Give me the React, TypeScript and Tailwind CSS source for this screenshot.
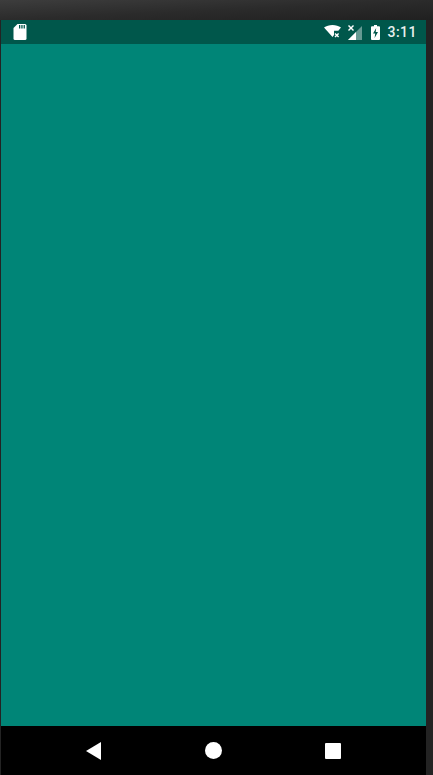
export default function App() {
    return (
        <div className="h-[775px] w-[433px] overflow-hidden bg-[#232323] flex flex-col">
            {/* emulator frame top edge */}
            <div className="h-5 bg-gradient-to-br from-[#3d3d3d] via-[#2b2b2b] to-[#202020]" />
            <div className="flex-1 flex flex-col ml-px mr-[7px]">
                {/* status bar */}
                <div className="h-6 bg-[#00574b] flex items-center justify-between pl-3 pr-[9px] text-white">
                    <svg width="14" height="16" viewBox="0 0 14 16" fill="#fff">
                        <path d="M4.5 0H12a1.5 1.5 0 0 1 1.5 1.5v13A1.5 1.5 0 0 1 12 16H2a1.5 1.5 0 0 1-1.5-1.5V4z" />
                        <path d="M6 1h1.3v3.5H6zM8.3 1h1.3v3.5H8.3zM10.6 1h1.3v3.5h-1.3z" fill="#00574b" />
                    </svg>
                    <div className="flex items-center">
                        <svg width="18" height="14" viewBox="0 0 18 14" fill="#fff">
                            <path d="M0 2.6C2.4.9 5.2 0 8.5 0s6.1.9 8.5 2.6l-2.7 3.1H10v4.4l-1.5 1.9z" />
                            <path d="M11.5 8l1.3 1.3L14.1 8l1 1-1.3 1.3 1.3 1.3-1 1-1.3-1.3-1.3 1.3-1-1 1.3-1.3L10.5 9z" />
                        </svg>
                        <svg className="ml-[6px]" width="14" height="15" viewBox="0 0 14 15" fill="#fff">
                            <path d="M14 1v14H0z" fillOpacity="0.4" />
                            <path d="M8 7v8H0z" />
                            <path d="M1 0l2 2 2-2 1 1-2 2 2 2-1 1-2-2-2 2-1-1 2-2-2-2z" />
                        </svg>
                        <svg className="ml-[9px]" width="9" height="15" viewBox="0 0 9 15" fill="#fff">
                            <path d="M3 0h3v1.2h2a1 1 0 0 1 1 1V14a1 1 0 0 1-1 1H1a1 1 0 0 1-1-1V2.2a1 1 0 0 1 1-1h2z" />
                            <path d="M5.2 3L2 8.6h2.2L3.6 13 7 7H4.7z" fill="#00574b" />
                        </svg>
                        <span className="ml-[7px] text-[14px] leading-none font-medium tracking-[0.5px] text-[#e8f0ee] font-['Roboto',sans-serif]">3:11</span>
                    </div>
                </div>
                {/* app content */}
                <div className="flex-1 bg-[#008577]" />
                {/* nav bar */}
                <div className="h-[49px] bg-black relative">
                    <svg className="absolute left-[85px] top-[16px]" width="15" height="18" viewBox="0 0 15 18" fill="#fff">
                        <path d="M15 0v18L0 9z" />
                    </svg>
                    <div className="absolute left-[204px] top-[16px] w-[17px] h-[17px] rounded-full bg-white" />
                    <div className="absolute left-[324px] top-[17px] w-4 h-4 rounded-[1px] bg-white" />
                </div>
            </div>
        </div>
    )
}
